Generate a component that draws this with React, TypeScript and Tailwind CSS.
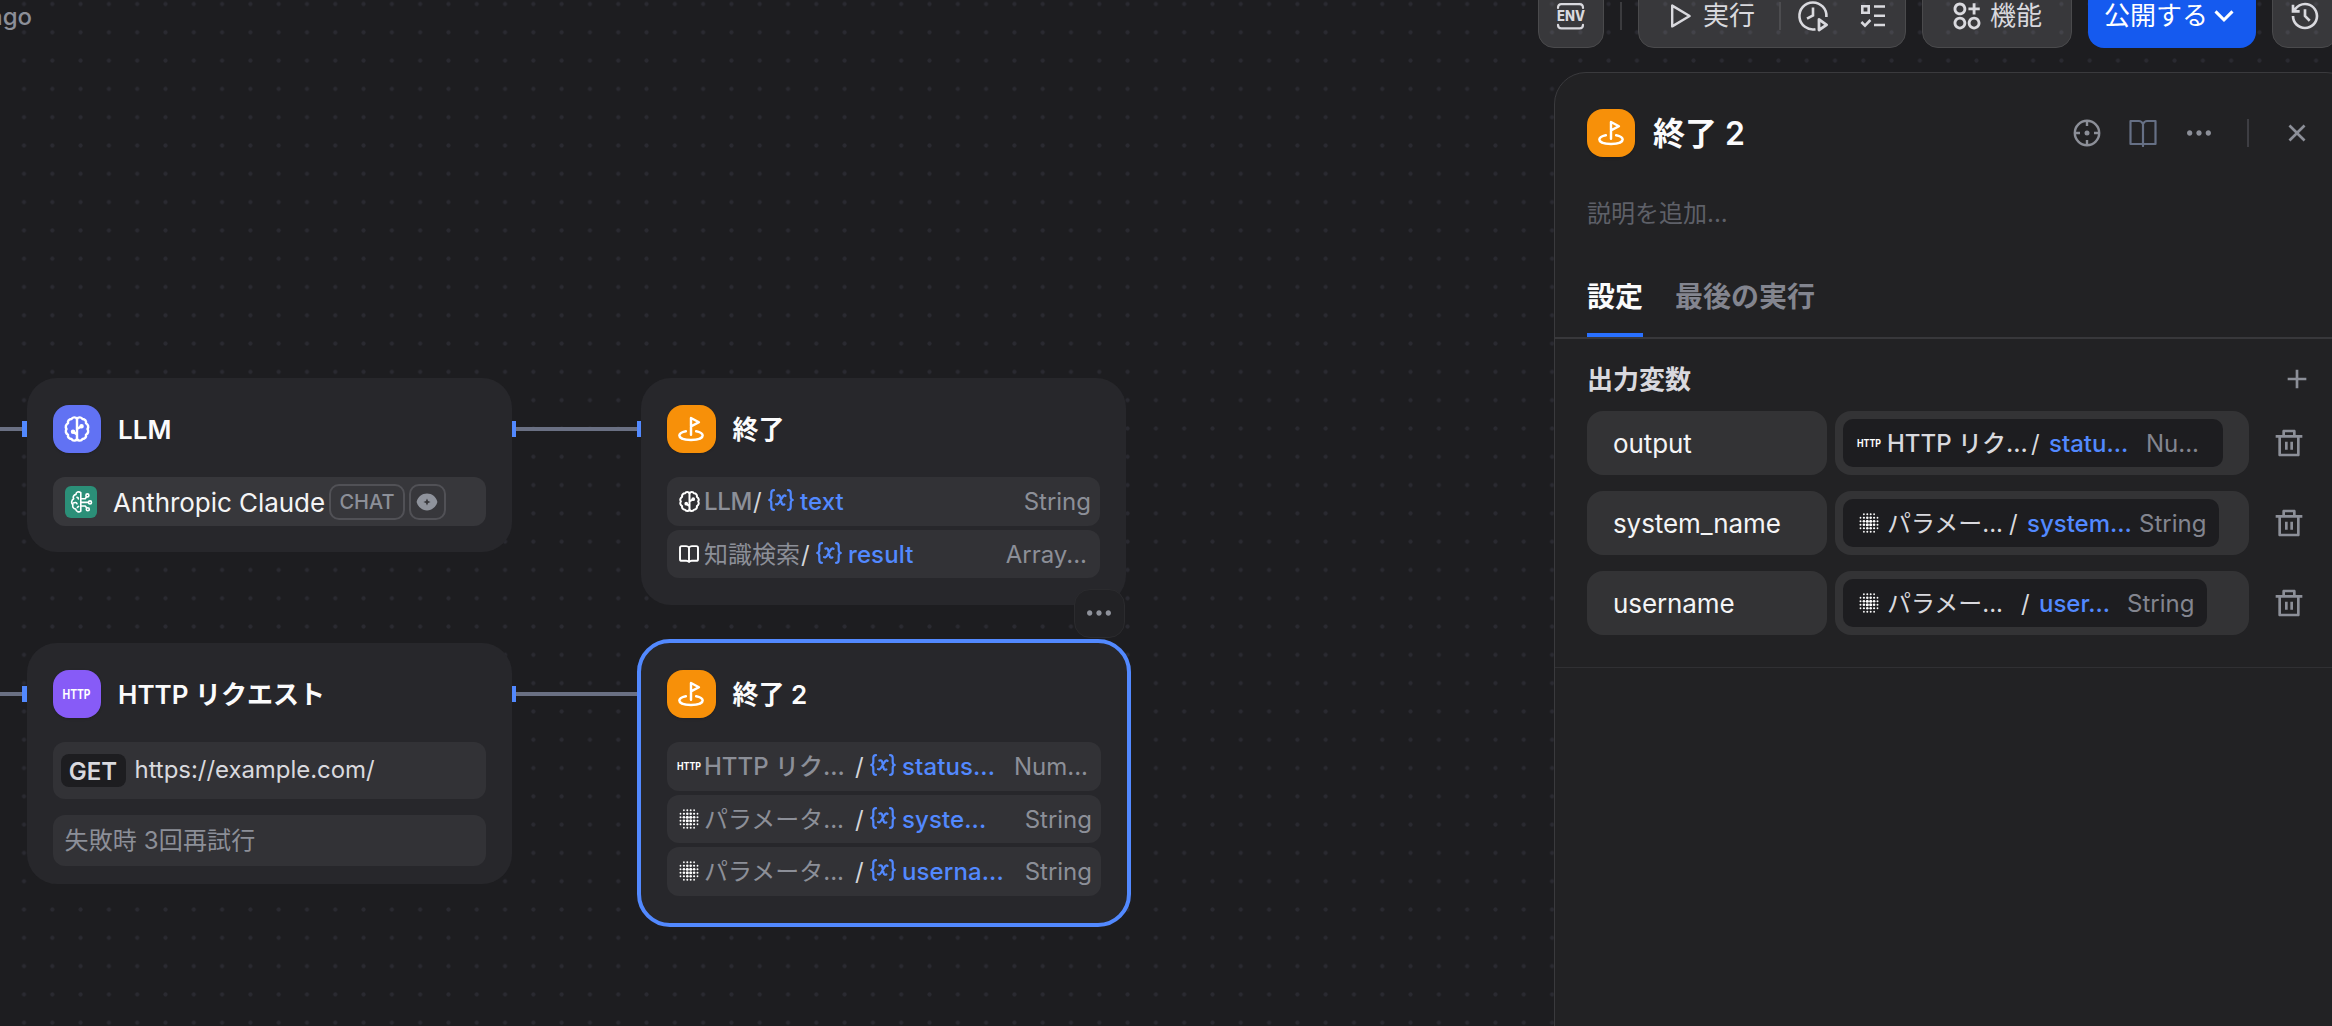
import React from "react";
import {
  RiAddLine,
  RiApps2AddLine,
  RiArrowDownSLine,
  RiCloseLine,
  RiDeleteBinLine,
  RiHistoryLine,
  RiMoreFill,
} from "react-icons/ri";

type IconProps = { className?: string };

const stroke = {
  fill: "none",
  stroke: "currentColor",
  strokeLinecap: "round" as const,
  strokeLinejoin: "round" as const,
};

function BrainIcon({ className }: IconProps) {
  return (
    <svg viewBox="0 0 24 24" className={className} {...stroke} strokeWidth={2.1}>
      <path d="M12 3.2C10.9 1.6 8.2 1.6 7.3 3.5C5.2 3.5 3.9 5.2 4.3 7.1C2.4 8.1 1.8 10.3 3 12C1.8 13.7 2.4 15.9 4.3 16.9C3.9 18.8 5.2 20.5 7.3 20.5C8.2 22.4 10.9 22.4 12 20.8C13.1 22.4 15.8 22.4 16.7 20.5C18.8 20.5 20.1 18.8 19.7 16.9C21.6 15.9 22.2 13.7 21 12C22.2 10.3 21.6 8.1 19.7 7.1C20.1 5.2 18.8 3.5 16.7 3.5C15.8 1.6 13.1 1.6 12 3.2Z" />
      <path d="M12 3.5V20.5M12 12L15.6 9.8M12 16.8L9 14.6" />
      <circle cx="15.9" cy="9.6" r="0.9" fill="currentColor" />
      <circle cx="8.6" cy="14.3" r="0.9" fill="currentColor" />
    </svg>
  );
}

function FlagIcon({ className }: IconProps) {
  return (
    <svg viewBox="0 0 24 24" className={className} {...stroke} strokeWidth={2.1}>
      <path d="M12 17V2.6L18.8 6.2L12 9.8" />
      <path d="M7.6 13.9C4.6 14.5 2 15.7 2 17.6C2 20 6.6 21.4 12 21.4C17.4 21.4 22 20 22 17.6C22 15.7 19.4 14.5 16.4 13.9" />
    </svg>
  );
}

function HttpIcon({ className }: IconProps) {
  return (
    <svg viewBox="0 0 24 12" overflow="visible" className={className}>
      <text x="0" y="10" fontSize="11" fontWeight="700" fontFamily="Inter" fill="currentColor" textLength="24" lengthAdjust="spacingAndGlyphs">
        HTTP
      </text>
    </svg>
  );
}

function BookIcon({ className }: IconProps) {
  return (
    <svg viewBox="0 0 24 24" className={className} {...stroke} strokeWidth={2.1}>
      <path d="M12 4.8C11.2 3.9 10.2 3.4 8.8 3.4H4C2.9 3.4 2.2 4.1 2.2 5.2V17.6C2.2 18.7 2.9 19.4 4 19.4H9C10.4 19.4 11.3 19.9 12 20.7C12.7 19.9 13.6 19.4 15 19.4H20C21.1 19.4 21.8 18.7 21.8 17.6V5.2C21.8 4.1 21.1 3.4 20 3.4H15.2C13.8 3.4 12.8 3.9 12 4.8ZM12 4.8V20" />
    </svg>
  );
}

function ManualIcon({ className }: IconProps) {
  return (
    <svg viewBox="0 0 28 28" className={className} {...stroke} strokeWidth={2.2}>
      <path d="M14 5C13 3 12 2 10 2H1.5V25H26.5V2H18C16 2 15 3 14 5ZM14 5V27" />
    </svg>
  );
}

/* Halftone disc: a 6×6 grid without its corners, heavier in the middle. */
function GridIcon({ className }: IconProps) {
  const steps = [-2.5, -1.5, -0.5, 0.5, 1.5, 2.5];
  const dots: React.ReactNode[] = [];
  for (const r of steps) {
    for (const c of steps) {
      const d = Math.hypot(r, c);
      if (d > 3) continue;
      dots.push(<circle key={r + "," + c} cx={12 + c * 3.4} cy={12 + r * 3.5} r={1.75 - d * 0.3} />);
    }
  }
  return (
    <svg viewBox="0 0 24 24" className={className} fill="currentColor">
      {dots}
    </svg>
  );
}

function VarIcon({ className }: IconProps) {
  return (
    <svg viewBox="0 0 26 22" className={className} {...stroke} strokeWidth={2.2}>
      <path d="M6 1.2C3.8 1.2 3.3 2.2 3.3 4V8C3.3 9.8 2.6 10.7 1.2 11C2.6 11.3 3.3 12.2 3.3 14V18C3.3 19.8 3.8 20.8 6 20.8" />
      <path d="M20 1.2C22.2 1.2 22.7 2.2 22.7 4V8C22.7 9.8 23.4 10.7 24.8 11C23.4 11.3 22.7 12.2 22.7 14V18C22.7 19.8 22.2 20.8 20 20.8" />
      <path d="M9.4 6.6C11 6 11.8 6.4 12.2 8L13.6 14C14 15.6 14.9 16 16.4 15.4M17.6 6.8C16.4 5.9 15.2 7 14.2 8.6L11.4 13.2C10.4 14.9 9.2 16 8 15.2" />
    </svg>
  );
}

function ModelIcon({ className }: IconProps) {
  return (
    <svg viewBox="0 0 32 32" className={className} {...stroke} strokeWidth={1.6}>
      <path d="M15.8 6.6C13.6 5 10.9 6.2 11 8.4C8.6 8.8 7.6 11 8.7 12.8C6.4 14 5.9 17 7.9 18.6C7.2 21 8.5 22.9 10.7 23.1C11.2 25.8 14 26.6 15.8 25.2V6.6Z" />
      <path d="M12 11.4C12.8 11.4 13.4 12 13.4 13M8.5 17C10 16 11.5 16.4 12 17.8M12.4 21.4L13.6 20.4" />
      <path d="M16 12.8H20.2L21.6 10.8M16 16.4H23M16 20H20.2L21.6 21.8" />
      <circle cx="22.4" cy="9.4" r="1.5" />
      <circle cx="25" cy="16.4" r="1.5" />
      <circle cx="22.8" cy="23.2" r="1.5" />
    </svg>
  );
}

function EyeIcon({ className }: IconProps) {
  return (
    <svg viewBox="0 0 22 18" className={className}>
      <path fill="currentColor" fillRule="evenodd" d="M11 0.6C16 0.6 20.2 4 21.4 9C20.2 14 16 17.4 11 17.4C6 17.4 1.8 14 0.6 9C1.8 4 6 0.6 11 0.6ZM11 5.4L9.9 7.9L7.4 9L9.9 10.1L11 12.6L12.1 10.1L14.6 9L12.1 7.9Z" />
    </svg>
  );
}

function EnvIcon({ className }: IconProps) {
  return (
    <svg viewBox="0 0 30 28" overflow="visible" className={className} {...stroke} strokeWidth={2.2}>
      <path d="M2 6C2 3.4 3 2.2 5.4 2.2H23.6C26 2.2 27 3.4 27 6M2 22.8C2 25.4 3 26.4 5.4 26.4H23.6C26 26.4 27 25.4 27 22.8" />
      <text x="1" y="19.4" fontSize="14" fontWeight="800" fontFamily="Inter" fill="currentColor" stroke="none" textLength="28" lengthAdjust="spacingAndGlyphs">
        ENV
      </text>
    </svg>
  );
}

function PlayIcon({ className }: IconProps) {
  return (
    <svg viewBox="0 0 22 26" className={className} fill="none" stroke="currentColor" strokeWidth={2.4} strokeLinejoin="round">
      <path d="M2.2 2.6V23.4L19.6 13Z" />
    </svg>
  );
}

function ClockPlayIcon({ className }: IconProps) {
  return (
    <svg viewBox="0 0 32 32" className={className} fill="none" stroke="currentColor" strokeWidth={2.6}>
      <path d="M18.5 29.2A13.5 13.5 0 1 1 29.4 17" />
      <path d="M16 7.5V15.5L10 18.6" />
      <path d="M22 19.4V30L29.6 24.8Z" strokeLinejoin="round" strokeWidth={2.8} />
    </svg>
  );
}

function ChecklistIcon({ className }: IconProps) {
  return (
    <svg viewBox="0 0 26 26" className={className} fill="none" stroke="currentColor" strokeWidth={2.6}>
      <path d="M2.3 3.3H8.7V9.7H2.3ZM14 3.5H25M14 12.7H25M14 22H25M1.4 19L5 22.6L10.4 17" />
    </svg>
  );
}

function TargetIcon({ className }: IconProps) {
  return (
    <svg viewBox="0 0 28 28" className={className} fill="none" stroke="currentColor" strokeWidth={2.4}>
      <circle cx="14" cy="14" r="12.2" />
      <path d="M14 2V7M14 21V26M2 14H7M21 14H26" />
      <circle cx="14" cy="14" r="2.5" fill="currentColor" stroke="none" />
    </svg>
  );
}

function NodeTitle({ tone, icon, children }: { tone: string; icon: React.ReactNode; children: React.ReactNode }) {
  return (
    <div className="flex items-center">
      <div className={"flex size-[48.5px] shrink-0 items-center justify-center rounded-2xl text-white shadow-sm " + tone}>{icon}</div>
      <div className="ml-[17px] translate-y-px text-[26px] leading-8 font-semibold text-[#fbfbfc]">{children}</div>
    </div>
  );
}

function Handle({ className }: { className: string }) {
  return <div className={"absolute h-4 w-[4.5px] bg-[#5289ff] " + className} />;
}

type VarRow = { icon: React.ReactNode; source: string; box: string; name: string; type: string; typeBox: string };

function OutputRow({ row }: { row: VarRow }) {
  return (
    <div className="flex h-[48.6px] items-center rounded-xl bg-[#323236] pr-[9px] pl-[10px] text-[24px] leading-8 whitespace-nowrap">
      <span className="flex w-6 justify-center text-white">{row.icon}</span>
      <span className={"ml-[3px] shrink-0 translate-y-px text-[#8c8f98] " + row.box}>{row.source}</span>
      <span className="w-[15px] shrink-0 translate-y-px text-[#d4d5d9]">/</span>
      <VarIcon className="h-[22px] w-[26px] shrink-0 -translate-y-px text-[#5289ff]" />
      <span className="ml-[6px] translate-y-px font-medium tracking-[0.1px] text-[#5289ff]">{row.name}</span>
      <span className={"ml-auto shrink-0 translate-y-px text-[#8c8f98] " + row.typeBox}>{row.type}</span>
    </div>
  );
}

const endRows: VarRow[] = [
  { icon: <BrainIcon className="size-[23px]" />, source: "LLM", box: "w-[49px] tracking-[-0.3px] font-medium", name: "text", type: "String", typeBox: "" },
  { icon: <BookIcon className="size-[22px]" />, source: "知識検索", box: "w-[97px]", name: "result", type: "Array...", typeBox: "pr-[4px]" },
];

const end2Rows: VarRow[] = [
  { icon: <HttpIcon className="h-3 w-6 shrink-0" />, source: "HTTP リク...", box: "w-[151px] font-medium", name: "status...", type: "Num...", typeBox: "pr-[4px]" },
  { icon: <GridIcon className="size-6" />, source: "パラメータ...", box: "w-[151px]", name: "syste...", type: "String", typeBox: "" },
  { icon: <GridIcon className="size-6" />, source: "パラメータ...", box: "w-[151px]", name: "userna...", type: "String", typeBox: "" },
];

function Canvas() {
  return (
    <div className="absolute inset-0 overflow-hidden bg-[#1d1d20] bg-[radial-gradient(circle_at_center,#2a2a31_1.7px,transparent_2.4px)] bg-[size:28.31px_28.31px] bg-[position:9.85px_-10.15px]">
      {/* edges */}
      <div className="absolute top-[426.5px] left-0 h-1 w-6 bg-[#6a7083]" />
      <div className="absolute top-[426.5px] left-[515px] h-1 w-[124px] bg-[#6a7083]" />
      <div className="absolute top-[691.5px] left-0 h-1 w-6 bg-[#6a7083]" />
      <div className="absolute top-[691.5px] left-[515px] h-1 w-[124px] bg-[#6a7083]" />

      {/* LLM */}
      <div className="absolute top-[378px] left-[26.5px] h-[174px] w-[485px] rounded-[30px] bg-[#27272b] px-[26px] pt-[26.5px]">
        <Handle className="top-[42.5px] -left-[4.5px]" />
        <Handle className="top-[42.5px] -right-[4.5px]" />
        <NodeTitle tone="bg-[#6172f3]" icon={<BrainIcon className="size-[28px]" />}>LLM</NodeTitle>
        <div className="mt-6 flex h-[49px] items-center rounded-xl bg-[#37373b] pl-[12.5px] whitespace-nowrap">
          <div className="size-8 rounded-md bg-[#2b8f78] text-white">
            <ModelIcon className="size-8" />
          </div>
          <span className="ml-4 w-[216px] translate-y-px text-[26px] leading-8 tracking-[-0.05px] text-[#f4f4f5]">Anthropic Claude</span>
          <span className="flex h-9 w-[76px] items-center justify-center rounded-[10px] border-2 border-[#515156] text-[20px] leading-8 font-medium text-[#8c8f98]">CHAT</span>
          <span className="ml-1 flex h-9 w-[36.5px] items-center justify-center rounded-[10px] border-2 border-[#515156] text-[#8f939c]">
            <EyeIcon className="h-[18px] w-[22px]" />
          </span>
        </div>
      </div>

      {/* HTTP request */}
      <div className="absolute top-[643px] left-[26.5px] h-[241px] w-[485px] rounded-[30px] bg-[#27272b] px-[26px] pt-[26.5px]">
        <Handle className="top-[42.5px] -left-[4.5px]" />
        <Handle className="top-[42.5px] -right-[4.5px]" />
        <NodeTitle tone="bg-[#875bf7]" icon={<HttpIcon className="h-[14px] w-[29px]" />}>HTTP リクエスト</NodeTitle>
        <div className="mt-6 flex h-[57px] items-center rounded-xl bg-[#323236] pl-2 text-[24px]">
          <span className="flex h-[33px] w-[65px] items-center justify-center rounded-lg bg-[#1d1d20] pt-[2px] leading-8 font-semibold text-[#d9d9de]">GET</span>
          <span className="ml-[9px] pb-[2px] leading-8 tracking-[-0.05px] text-[#d9d9de]">https://example.com/</span>
        </div>
        <div className="mt-4 flex h-[50.5px] items-center rounded-xl bg-[#323236] pl-3 text-[24px] leading-8 text-[#8c8f98]">
          <span className="translate-y-px tracking-[0.15px]">失敗時 3回再試行</span>
        </div>
      </div>

      {/* End */}
      <div className="absolute top-[378px] left-[641px] h-[226.5px] w-[485px] rounded-[30px] bg-[#27272b] px-[26px] pt-[26.5px]">
        <Handle className="top-[42.5px] -left-[4.5px]" />
        <NodeTitle tone="bg-[#f79009]" icon={<FlagIcon className="size-[28px]" />}>終了</NodeTitle>
        <div className="mt-6 flex flex-col gap-1">
          {endRows.map((r) => <OutputRow key={r.name} row={r} />)}
        </div>
      </div>

      {/* End 2, selected */}
      <div className="absolute top-[639px] left-[637px] h-[287.5px] w-[494px] rounded-[33px] border-4 border-[#5289ff] bg-[#27272b] px-[26px] pt-[26.5px]">
        <NodeTitle tone="bg-[#f79009]" icon={<FlagIcon className="size-[28px]" />}>終了 2</NodeTitle>
        <div className="mt-6 flex flex-col gap-1">
          {end2Rows.map((r) => <OutputRow key={r.name} row={r} />)}
        </div>
      </div>
      <div className="absolute top-[588.5px] left-[1073.5px] flex h-[49px] w-[51px] items-center justify-center rounded-2xl border border-[#2b2b2e] bg-[#222225] text-[#8f929b]">
        <RiMoreFill className="size-8" />
      </div>

      <div className="absolute top-px right-[2300px] text-[24px] leading-8 font-medium whitespace-nowrap text-[#8c8f98]">ago</div>
    </div>
  );
}

const glass = "flex h-16 shrink-0 items-center rounded-2xl border border-[#4a4a4c] bg-white/12 text-[#d9d9de]";

function Toolbar() {
  return (
    <div className="relative -mt-4 flex h-16 pl-[1538px] text-[26px] leading-8 whitespace-nowrap">
      <div className={glass + " w-[66px] justify-center"}>
        <EnvIcon className="h-[28px] w-[30px]" />
      </div>
      <div className="mt-[18px] ml-4 h-7 w-[2px] shrink-0 bg-[#3b3b3e]" />
      <div className={glass + " ml-4 w-[268px]"}>
        <PlayIcon className="ml-[31px] h-[26px] w-[22px]" />
        <span className="ml-[11px]">実行</span>
        <div className="ml-[24px] h-7 w-[2px] bg-[#4c4c4f]" />
        <ClockPlayIcon className="ml-4 size-8" />
        <ChecklistIcon className="ml-[31px] size-[26px]" />
      </div>
      <div className={glass + " ml-4 w-[150px]"}>
        <RiApps2AddLine className="ml-[27px] size-[34px]" />
        <span className="ml-[6px]">機能</span>
      </div>
      <div className="ml-4 flex h-16 w-[168px] shrink-0 items-center rounded-2xl bg-[#155aef] pl-4 text-white">
        <span>公開する</span>
        <RiArrowDownSLine className="-ml-[2px] size-9" />
      </div>
      <div className={glass + " ml-4 w-[66px] pl-4"}>
        <RiHistoryLine className="size-8" />
      </div>
    </div>
  );
}

type OutputVar = {
  name: string; icon: React.ReactNode; chip: string; source: string; sourceBox: string;
  field: string; fieldBox: string; type: string;
};

const outputs: OutputVar[] = [
  { name: "output", icon: <HttpIcon className="h-3 w-6 shrink-0" />, chip: "w-[380px]", source: "HTTP リク...", sourceBox: "w-[144px] font-medium", field: "statu...", fieldBox: "w-[97px]", type: "Nu..." },
  { name: "system_name", icon: <GridIcon className="size-6" />, chip: "w-[376px]", source: "パラメー...", sourceBox: "w-[122px]", field: "system...", fieldBox: "w-[112px]", type: "String" },
  { name: "username", icon: <GridIcon className="size-6" />, chip: "w-[364px]", source: "パラメー...", sourceBox: "w-[134px]", field: "user...", fieldBox: "w-[88px]", type: "String" },
];

function Panel() {
  return (
    <div className="relative mt-6 ml-[1554px] h-[970px] w-[804px] rounded-tl-[32px] rounded-tr-[32px] border border-[#3a3a3d] bg-[#222224]">
      <div className="mt-9 flex h-12 items-center pl-8">
        <div className="flex size-12 items-center justify-center rounded-2xl bg-[#f79009] text-white shadow-sm">
          <FlagIcon className="size-[28px]" />
        </div>
        <div className="ml-[18px] translate-y-px text-[32px] leading-10 font-semibold text-[#fbfbfc]">終了 2</div>
        <div className="ml-auto flex items-center pr-[44px] text-[#8c8f98]">
          <TargetIcon className="size-7" />
          <ManualIcon className="ml-7 size-7 text-[#667085]" />
          <RiMoreFill className="ml-[26px] size-8" />
          <div className="ml-8 h-7 w-[2px] bg-[#3e3e43]" />
          <RiCloseLine className="ml-8 size-8" />
        </div>
      </div>
      <div className="mt-[41px] pl-8 text-[24px] leading-8 text-[#5e6068]">説明を追加...</div>
      <div className="mt-[43px] flex h-[66px] gap-8 border-b-2 border-[#38383b] pl-8 text-[28px] leading-10 font-bold">
        <div className="h-16 border-b-4 border-[#2970ff] pt-1 text-[#fbfbfc]">設定</div>
        <div className="pt-1 text-[#83858f]">最後の実行</div>
      </div>
      <div className="mt-6 flex h-8 items-center pl-8">
        <span className="translate-y-px text-[26px] leading-8 font-bold text-[#d9d9de]">出力変数</span>
        <RiAddLine className="mr-[44px] ml-auto size-8 text-[#8c8f98]" />
      </div>
      <div className="mt-4 flex flex-col gap-4 pl-8">
        {outputs.map((o) => (
          <div key={o.name} className="flex h-16 items-center">
            <div className="flex h-16 w-60 items-center rounded-2xl bg-[#333335] pl-[26px] text-[26px] leading-8 text-[#f4f4f5]">
              <span className="translate-y-px tracking-[-0.1px]">{o.name}</span>
            </div>
            <div className="ml-2 flex h-16 w-[414px] items-center rounded-2xl bg-[#333335] pl-2">
              <div className={"flex h-12 items-center rounded-[10px] bg-[#1d1d20] pl-[14px] text-[24px] leading-8 whitespace-nowrap " + o.chip}>
                <span className="flex w-6 shrink-0 justify-center text-white">{o.icon}</span>
                <span className={"ml-[6px] shrink-0 translate-y-px text-[#d9d9de] " + o.sourceBox}>{o.source}</span>
                <span className="w-[18px] shrink-0 translate-y-px text-[#d9d9de]">/</span>
                <span className={"shrink-0 translate-y-px font-medium text-[#5289ff] " + o.fieldBox}>{o.field}</span>
                <span className="translate-y-px text-[#83858f]">{o.type}</span>
              </div>
            </div>
            <RiDeleteBinLine className="ml-6 size-8 text-[#8c8f98]" />
          </div>
        ))}
      </div>
      <div className="mt-8 h-px bg-[#303033]" />
    </div>
  );
}

export default function App() {
  return (
    <div className="relative h-[1026px] w-[2332px] overflow-hidden bg-[#1d1d20] font-['Inter','Noto_Sans_CJK_JP',sans-serif]">
      <Canvas />
      <div className="flow-root">
        <Toolbar />
        <Panel />
      </div>
    </div>
  );
}
